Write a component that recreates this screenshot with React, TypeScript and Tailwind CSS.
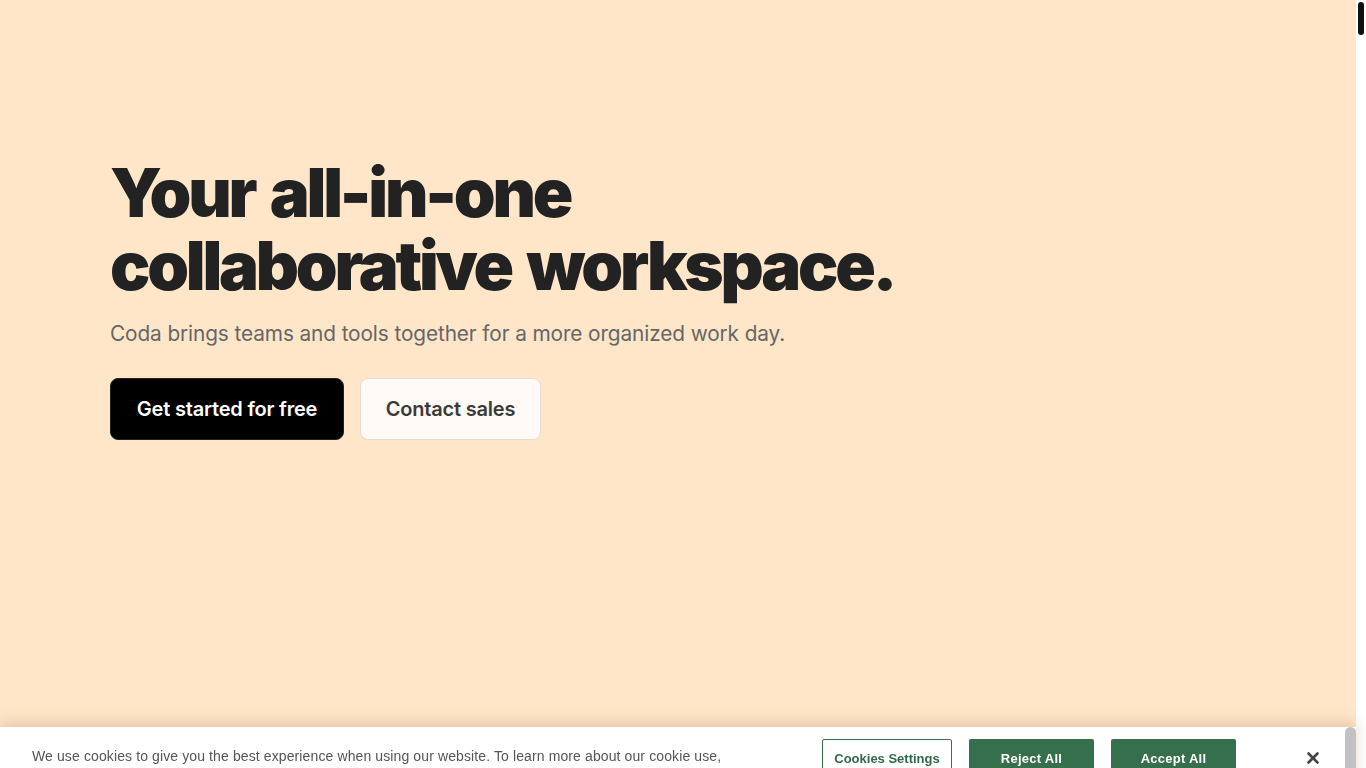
import React from 'react';
import { X } from 'lucide-react';

const CookieBanner: React.FC = () => (
  <div className="fixed left-0 top-[727px] w-[1356px] h-[140px] bg-white shadow-[0_-4px_14px_rgba(150,100,50,0.25)] overflow-hidden">
    <div className="flex items-start justify-between pl-8 pr-[34px] pt-3">
      <p className="pt-[6px] text-[14px] leading-[22px] tracking-[0.008em] text-[#555] font-['Liberation_Sans',Arial,sans-serif] w-[704px]">
        We use cookies to give you the best experience when using our website. To learn more about our cookie use, see our Cookie Policy.
      </p>
      <div className="flex items-start gap-[17px]">
        <button className="w-[130px] h-[40px] rounded-[2px] border border-[#3d6f4f] text-[#33684a] text-[13px] font-bold font-['Liberation_Sans',Arial,sans-serif]">
          Cookies Settings
        </button>
        <button className="w-[125px] h-[40px] rounded-[2px] bg-[#366f4b] text-white text-[13px] font-bold tracking-[0.02em] font-['Liberation_Sans',Arial,sans-serif]">
          Reject All
        </button>
        <button className="w-[125px] h-[40px] rounded-[2px] bg-[#366f4b] text-white text-[13px] font-bold tracking-[0.02em] font-['Liberation_Sans',Arial,sans-serif]">
          Accept All
        </button>
        <button className="ml-[51px] mt-[10px] text-[#444]">
          <X className="w-[18px] h-[18px]" strokeWidth={3.5} />
        </button>
      </div>
    </div>
    {/* banner's own scrollbar */}
    <div className="absolute right-0 top-0 w-[12px] h-full bg-white">
      <div className="mx-auto w-[11px] h-full rounded-t-full bg-[#c1c1c1]" />
    </div>
  </div>
);

export default function App() {
  return (
    <div className="min-h-screen w-full bg-white font-['Inter',sans-serif]">
      <div className="w-[1356px] h-screen bg-[#ffe6c9]">
        <main className="pl-[110px] pt-[156px]">
          <h1 className="text-[#222] font-black text-[67px] leading-[73px] tracking-[-0.048em] [word-spacing:0.08em]">
            Your all-in-one
            <br />
            collaborative workspace.
          </h1>
          <p className="mt-[17px] text-[20.8px] leading-[30px] text-[#666] tracking-[-0.005em]">
            Coda brings teams and tools together for a more organized work day.
          </p>
          <div className="mt-[29px] flex gap-4">
            <button className="w-[234px] h-[62px] rounded-[8px] bg-black border border-[#222] text-white text-[20px] font-semibold tracking-[-0.01em]">
              Get started for free
            </button>
            <button className="w-[181px] h-[62px] rounded-[8px] bg-[#fffaf5] border border-[#e3ddd6] text-[#3a3a3a] text-[20px] font-semibold tracking-[-0.01em]">
              Contact sales
            </button>
          </div>
        </main>
      </div>

      {/* page scrollbar */}
      <div className="fixed right-0 top-0 w-[10px] h-full bg-white">
        <div className="mt-[2px] mx-auto w-[6px] h-[33px] rounded-full bg-[#111]" />
      </div>

      <CookieBanner />
    </div>
  );
}
